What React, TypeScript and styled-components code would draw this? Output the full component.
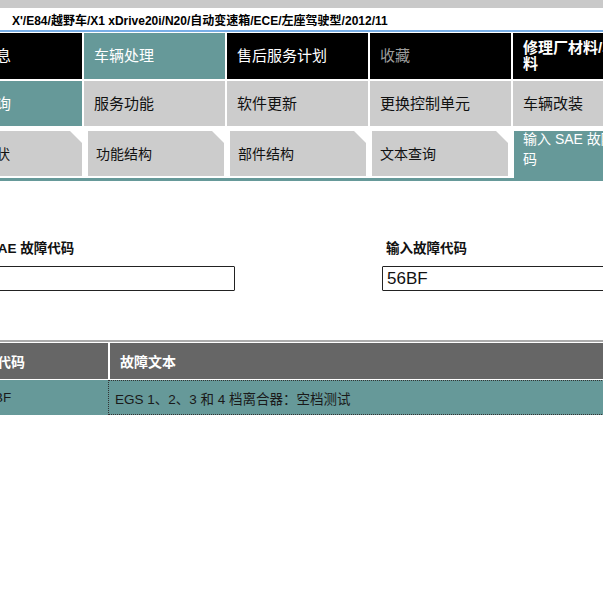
import React from 'react';
import styled, { createGlobalStyle, css } from 'styled-components';

const teal = '#669999';
const font = '"Liberation Sans", "Noto Sans CJK SC", Arial, sans-serif';

const GlobalStyle = createGlobalStyle`
  html, body {
    margin: 0;
    padding: 0;
    background: #ffffff;
    overflow: hidden;
  }
  body {
    font-family: ${font};
  }
`;

const Page = styled.div`
  width: 603px;
  height: 601px;
  overflow: hidden;
  background: #ffffff;
`;

const TopStrip = styled.div`
  height: 8px;
  background: #c9c9c9;
`;

const PathBar = styled.div`
  height: 22px;
  display: flex;
  align-items: center;
  padding-left: 12px;
  font-size: 12px;
  font-weight: bold;
  color: #000;
  border-bottom: 2px solid #78aee6;
  margin-bottom: 1px;
  white-space: nowrap;
`;

// page is scrolled sideways, so the content starts left of the window
const Scrolled = styled.div`
  margin-left: -60px;
  width: 920px;
`;

type Tone = 'dark' | 'active' | 'light' | 'muted';

const MenuRow = styled.div<{ $after: number }>`
  display: flex;
  gap: 2px;
  padding-left: 1px;
  margin-bottom: ${p => p.$after}px;
`;

const toneStyles: Record<Tone, ReturnType<typeof css>> = {
  dark: css`background: #000; color: #fff;`,
  muted: css`background: #000; color: #9c9c9c;`,
  active: css`background: ${teal}; color: #fff;`,
  light: css`background: #cccccc; color: #111;`,
};

const MenuCell = styled.div<{ $tone: Tone; $h: number; $bold?: boolean }>`
  flex: 0 0 141px;
  box-sizing: border-box;
  height: ${p => p.$h}px;
  padding: 0 3px 0 10px;
  display: flex;
  align-items: center;
  font-size: 15px;
  line-height: 16px;
  font-weight: ${p => (p.$bold ? 'bold' : 'normal')};
  ${p => toneStyles[p.$tone]}
`;

const TabRow = styled.div`
  display: flex;
  gap: 6px;
  padding-left: 6px;
  border-bottom: 3px solid ${teal};
`;

const Tab = styled.div<{ $active?: boolean }>`
  flex: 0 0 136px;
  box-sizing: border-box;
  font-size: 14px;
  ${p =>
    p.$active
      ? css`
          height: 47px;
          background: ${teal};
          color: #fff;
          padding: 0 12px 0 9px;
          line-height: 20px;
          span { display: block; margin-top: -2px; }
        `
      : css`
          height: 45px;
          margin-bottom: 2px;
          background: #cccccc;
          color: #111;
          padding: 0 8px 2px;
          display: flex;
          align-items: center;
          clip-path: polygon(0 0, calc(100% - 12px) 0, 100% 12px, 100% 100%, 0 100%);
        `}
`;

const Form = styled.div`
  display: grid;
  grid-template-columns: 281px 281px;
  column-gap: 147px;
  padding: 60px 0 0 14px;
`;

const Field = styled.div`
  display: flex;
  flex-direction: column;
  gap: 9px;
`;

const FieldLabel = styled.label`
  padding-left: 4px;
  font-size: 13.5px;
  line-height: 16px;
  font-weight: bold;
  color: #111;
  white-space: nowrap;
`;

const FieldInput = styled.input`
  box-sizing: border-box;
  width: 100%;
  height: 25px;
  margin: 0;
  padding: 0 4px;
  border: 1px solid #222;
  border-radius: 1px;
  font-family: ${font};
  font-size: 17px;
  color: #111;
  background: #fff;
  outline: none;
`;

const Table = styled.div`
  margin: 49px 0 0 19px;
  border-top: 2px solid #ababab;
  padding-top: 1px;
`;

const TableRow = styled.div<{ $head?: boolean }>`
  display: grid;
  grid-template-columns: 149px 1fr;
  height: ${p => (p.$head ? 36 : 35)}px;
  margin-bottom: ${p => (p.$head ? 1 : 0)}px;
  background: ${p => (p.$head ? '#666666' : teal)};
`;

const HeadCell = styled.div<{ $split?: boolean }>`
  display: flex;
  align-items: center;
  padding-left: 10px;
  font-size: 14px;
  font-weight: bold;
  color: #fff;
  border-left: ${p => (p.$split ? '2px solid #fff' : 'none')};
`;

const BodyCell = styled.div<{ $focus?: boolean; $indent: number }>`
  box-sizing: border-box;
  display: flex;
  align-items: center;
  padding-left: ${p => p.$indent}px;
  font-size: 13.5px;
  color: #1a1a1a;
  white-space: nowrap;
  border: ${p => (p.$focus ? '1px dotted #333' : 'none')};
`;

const topMenu: { label: string; tone: Tone; bold?: boolean }[] = [
  { label: '车辆信息', tone: 'dark' },
  { label: '车辆处理', tone: 'active' },
  { label: '售后服务计划', tone: 'dark' },
  { label: '收藏', tone: 'muted' },
  { label: '修理厂材料/车间资料', tone: 'dark', bold: true },
];

const subMenu: { label: string; tone: Tone }[] = [
  { label: '故障查询', tone: 'active' },
  { label: '服务功能', tone: 'light' },
  { label: '软件更新', tone: 'light' },
  { label: '更换控制单元', tone: 'light' },
  { label: '车辆改装', tone: 'light' },
];

const tabs = ['故障症状', '功能结构', '部件结构', '文本查询'];

export default function App() {
  return (
    <Page>
      <GlobalStyle />
      <TopStrip />
      <PathBar>X'/E84/越野车/X1 xDrive20i/N20/自动变速箱/ECE/左座驾驶型/2012/11</PathBar>
      <Scrolled>
        <MenuRow $after={2}>
          {topMenu.map(item => (
            <MenuCell key={item.label} $tone={item.tone} $h={46} $bold={item.bold}>
              {item.label}
            </MenuCell>
          ))}
        </MenuRow>
        <MenuRow $after={5}>
          {subMenu.map(item => (
            <MenuCell key={item.label} $tone={item.tone} $h={45}>
              {item.label}
            </MenuCell>
          ))}
        </MenuRow>
        <TabRow>
          {tabs.map(t => (
            <Tab key={t}>{t}</Tab>
          ))}
          <Tab $active>
            <span>输入 SAE 故障代码</span>
          </Tab>
        </TabRow>

        <Form>
          <Field>
            <FieldLabel>输入 SAE 故障代码</FieldLabel>
            <FieldInput defaultValue="" />
          </Field>
          <Field>
            <FieldLabel>输入故障代码</FieldLabel>
            <FieldInput defaultValue="56BF" />
          </Field>
        </Form>

        <Table>
          <TableRow $head>
            <HeadCell>故障代码</HeadCell>
            <HeadCell $split>故障文本</HeadCell>
          </TableRow>
          <TableRow>
            <BodyCell $indent={20}>56BF</BodyCell>
            <BodyCell $focus $indent={6}>EGS 1、2、3 和 4 档离合器：空档测试</BodyCell>
          </TableRow>
        </Table>
      </Scrolled>
    </Page>
  );
}
